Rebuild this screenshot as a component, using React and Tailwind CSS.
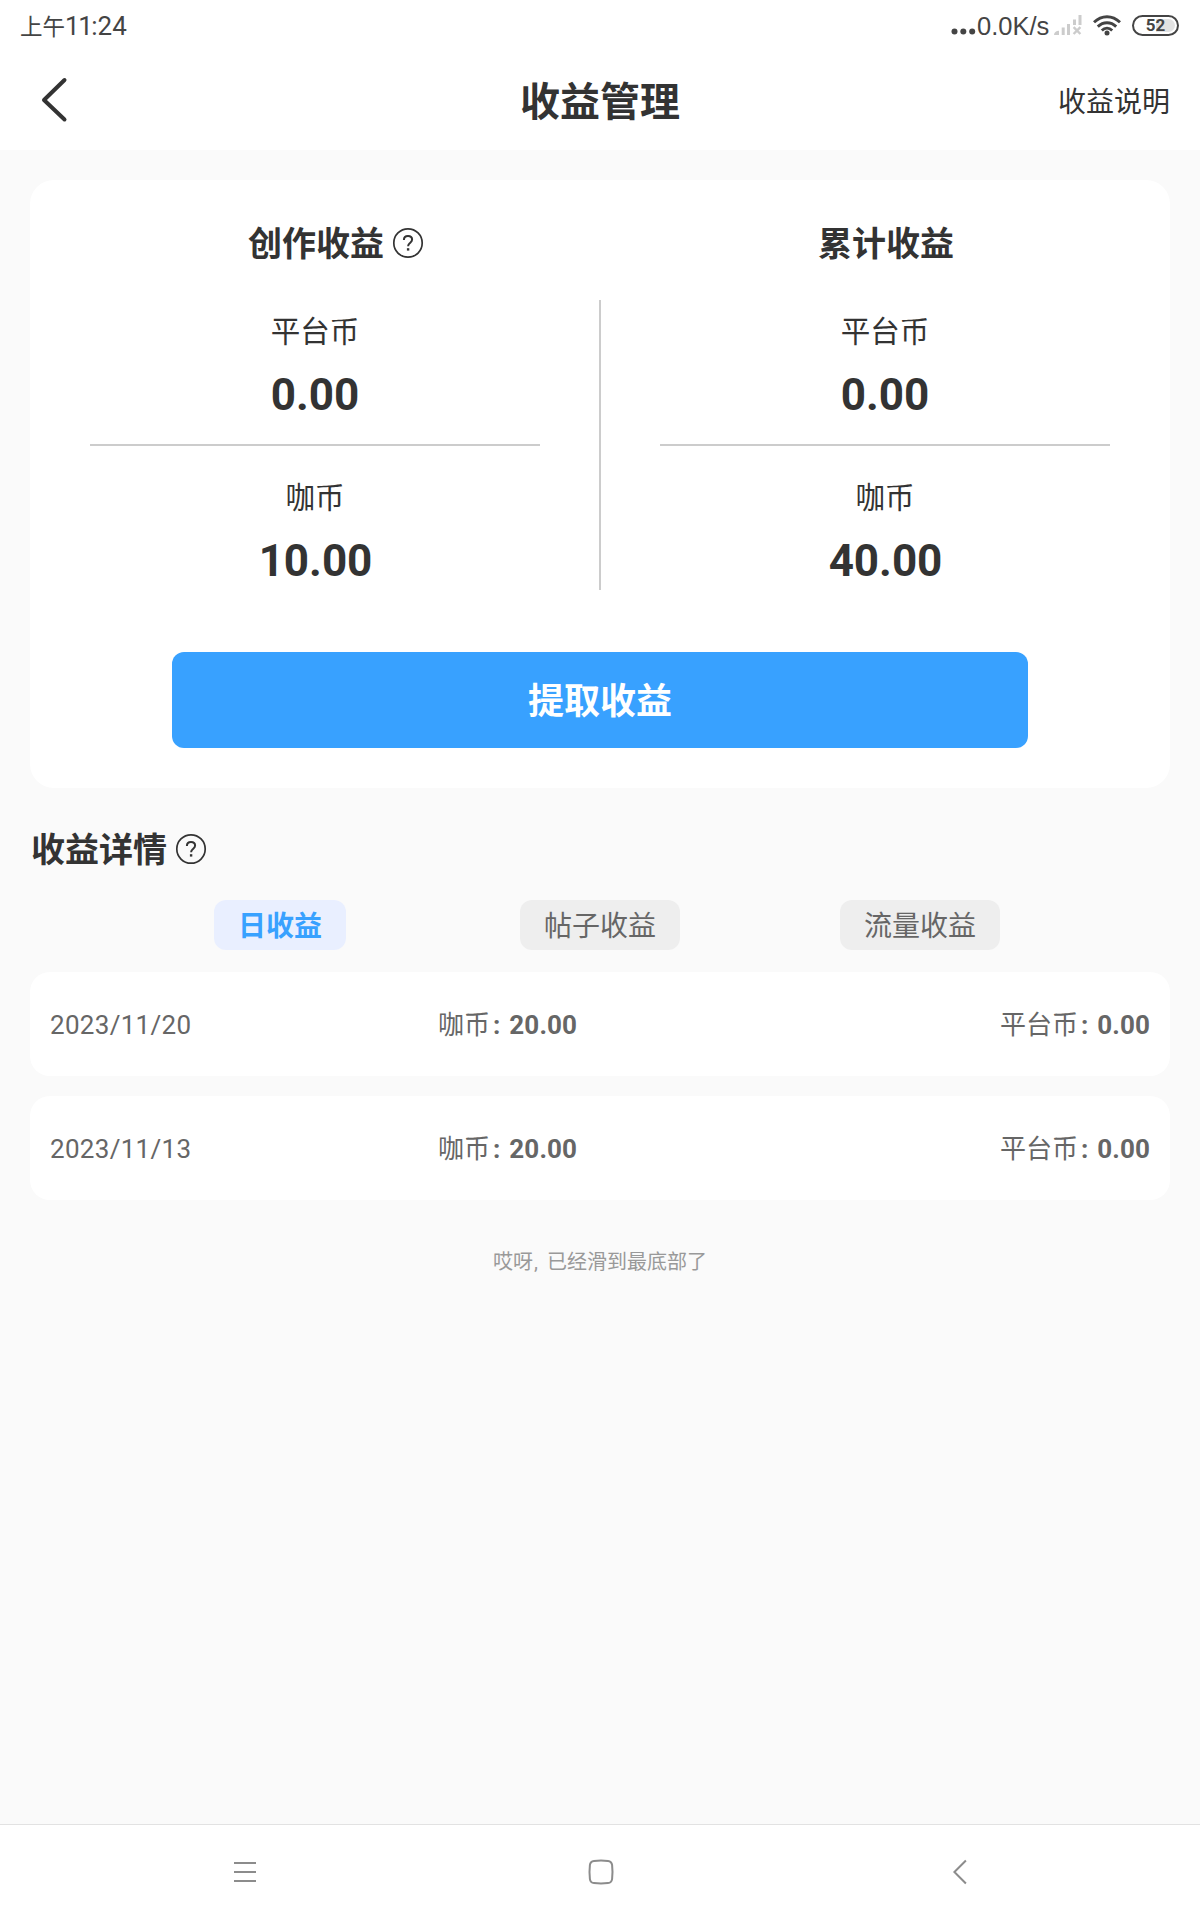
import React from 'react';

const font = { fontFamily: 'Roboto, "Noto Sans CJK SC", sans-serif' };

function Help() {
  return (
    <svg className="ml-[8px] shrink-0" width="32" height="32" viewBox="0 0 32 32" fill="none" stroke="#333" strokeWidth="1.7">
      <circle cx="16" cy="16" r="14.2" />
      <path d="M11.9 12.900c0-2.500 1.700-4 4.100-4s4.100 1.500 4.100 3.600c0 1.700-1 2.400-2.200 3.500-1.300 1.100-1.800 1.700-1.800 3.300" strokeWidth="2" />
      <path d="M16.100 21.200v2.400" strokeWidth="2.400" />
    </svg>
  );
}

function StatusIcons() {
  return (
    <>
      <svg className="ml-auto" width="26" height="40" viewBox="0 0 26 40" fill="#444">
        <circle cx="3.500" cy="26.500" r="3" />
        <circle cx="12.300" cy="26.500" r="3" />
        <circle cx="21.200" cy="26.500" r="3" />
      </svg>
      <span className="w-[77px] pt-[2px] text-[25.500px] whitespace-nowrap font-['Liberation_Sans']">0.0K/s</span>
      <svg width="28" height="20" viewBox="0 0 28 20" fill="#ccc">
        <path d="M0 20C0 17.500 2 15.700 5 15.700V20ZM7.700 12.500h3V20h-3ZM13 9h3v11h-3ZM19 4.500h3V10h-3ZM24.500 0h3v10h-3Z" />
        <path d="M19.600 12.200l6.800 6.800M26.400 12.200l-6.800 6.800" stroke="#ccc" strokeWidth="2.400" />
      </svg>
      <svg className="ml-[11px]" width="28" height="21" viewBox="0 0 28 21" fill="none" stroke="#444" strokeWidth="2.900">
        <path d="M1 7.300C8.500-.2 19.500-.2 27 7.300" />
        <path d="M4.800 11.600C10.200 6.400 17.800 6.400 23.200 11.600" />
        <path d="M8.800 15.500C11.900 12.500 16.100 12.500 19.200 15.500" />
        <circle cx="14" cy="18" r="2.500" fill="#444" stroke="none" />
      </svg>
      <div className="mr-px ml-[11px] flex h-[21px] w-[47px] rounded-full border-2 border-[#444] p-[2px]">
        <div className="flex flex-1 items-center justify-center rounded-full bg-[linear-gradient(90deg,#fff_52%,#e2e2e2_52%)] text-[17px] leading-none font-bold text-[#444]">52</div>
      </div>
    </>
  );
}

function Column({ title, help, top, bottom }) {
  return (
    <div className="flex w-[570px] flex-col items-center">
      <div className="flex h-[40px] items-center pl-[2px] text-[34px] leading-[40px] font-bold">
        {help && <span className="w-[40px]" />}
        <span className="relative top-[1px]">{title}</span>
        {help && <Help />}
      </div>
      <div className="mt-[49px] text-[29.500px] leading-[40px]">平台币</div>
      <div className="mt-[17px] text-[44px] leading-[52px] font-bold">{top}</div>
      <div className="mt-[23px] h-[2px] w-[450px] bg-[#ccc]" />
      <div className="mt-[32px] text-[29.500px] leading-[40px]">咖币</div>
      <div className="mt-[17px] pl-px text-[44px] leading-[52px] font-bold">{bottom}</div>
    </div>
  );
}

function Amount({ label, value }) {
  return (
    <>
      <span>{label}</span>
      <b className="mr-[9px] ml-[3px]">:</b>
      <b className="tracking-[0.100px]">{value}</b>
    </>
  );
}

function Row({ date }) {
  return (
    <div className="flex h-[104px] items-center rounded-[20px] bg-white px-[20px] pt-[2px] text-[26px] text-[#666]">
      <span className="w-[388px] tracking-[0.300px]">{date}</span>
      <span className="flex"><Amount label="咖币" value="20.00" /></span>
      <span className="ml-auto flex"><Amount label="平台币" value="0.00" /></span>
    </div>
  );
}

export default function App() {
  return (
    <div className="flex h-[1920px] w-[1200px] flex-col overflow-hidden bg-[#fafafa] text-[#333]" style={font}>
      <div className="flex h-[50px] items-center bg-white pr-[20px] pl-[20px] text-[#444]">
        <span className="flex items-baseline pt-[2px] text-[26px]">
          <span className="text-[22.500px]">上午</span>
          <span className="tracking-[-1.500px]">11</span>
          <span>:24</span>
        </span>
        <StatusIcons />
      </div>
      <div className="flex h-[100px] items-center bg-white pr-[30px] pl-[40px]">
        <div className="w-[190px]">
          <svg width="30" height="46" viewBox="0 0 30 46" fill="none" stroke="#333" strokeWidth="4" strokeLinecap="round" strokeLinejoin="round">
            <path d="M24.500 3L4 23L24.500 42.500" />
          </svg>
        </div>
        <span className="flex-1 pt-[5px] text-center text-[40px] font-bold">收益管理</span>
        <span className="w-[200px] pt-[5px] text-right text-[28px]">收益说明</span>
      </div>
      <div className="mx-[30px] mt-[30px] flex h-[608px] shrink-0 flex-col items-center rounded-[24px] bg-white pt-[43px]">
        <div className="flex h-[367px]">
          <Column title="创作收益" help top="0.00" bottom="10.00" />
          <div className="mx-[-1px] mt-[77px] h-[290px] w-[2px] bg-[#ccc]" />
          <Column title="累计收益" top="0.00" bottom="40.00" />
        </div>
        <button className="mt-[62px] flex h-[96px] w-[856px] items-center justify-center rounded-[12px] bg-[#38a1ff] pt-[4px] text-[36px] font-bold text-white">提取收益</button>
      </div>
      <div className="mx-[31px] mt-[41px] flex h-[40px] items-center text-[34px] leading-[40px] font-bold">
        <span className="relative top-[1px]">收益详情</span>
        <Help />
      </div>
      <div className="mt-[31px] flex h-[50px] pl-[214px] text-[28px] text-[#666]">
        <div className="flex w-[132px] items-center justify-center rounded-[12px] bg-[#e9efff] pt-[4px] font-bold text-[#38a1ff]">日收益</div>
        <div className="ml-[174px] flex w-[160px] items-center justify-center rounded-[12px] bg-[#eee] pt-[4px]">帖子收益</div>
        <div className="ml-[160px] flex w-[160px] items-center justify-center rounded-[12px] bg-[#eee] pt-[4px]">流量收益</div>
      </div>
      <div className="mx-[30px] mt-[22px] flex flex-col gap-5">
        <Row date="2023/11/20" />
        <Row date="2023/11/13" />
      </div>
      <div className="mt-[47px] text-center text-[20px] leading-[30px] text-[#999]">
        哎呀<span className="mr-[9px] ml-px">,</span>已经滑到最底部了
      </div>
      <div className="mt-auto flex h-[96px] items-center border-t border-[#e2e2e2] bg-white pb-[2px] pl-[234px]">
        <svg width="22" height="26" viewBox="0 0 22 26" stroke="#8c8c8c" strokeWidth="2">
          <path d="M0 4H22M0 13H22M0 22H22" />
        </svg>
        <svg className="ml-[332px]" width="26" height="26" viewBox="0 0 26 26" fill="none" stroke="#8c8c8c" strokeWidth="2">
          <path d="M6 1.900Q13 1.100 20 1.900Q23.600 2.300 24.100 6Q24.900 13 24.100 20Q23.600 23.700 20 24.100Q13 24.900 6 24.100Q2.300 23.700 1.900 20Q1.100 13 1.900 6Q2.300 2.300 6 1.900Z" />
        </svg>
        <svg className="ml-[338px]" width="15" height="26" viewBox="0 0 15 26" fill="none" stroke="#8c8c8c" strokeWidth="2">
          <path d="M13.900 1.500L2.400 13L13.900 24.500" />
        </svg>
      </div>
    </div>
  );
}
